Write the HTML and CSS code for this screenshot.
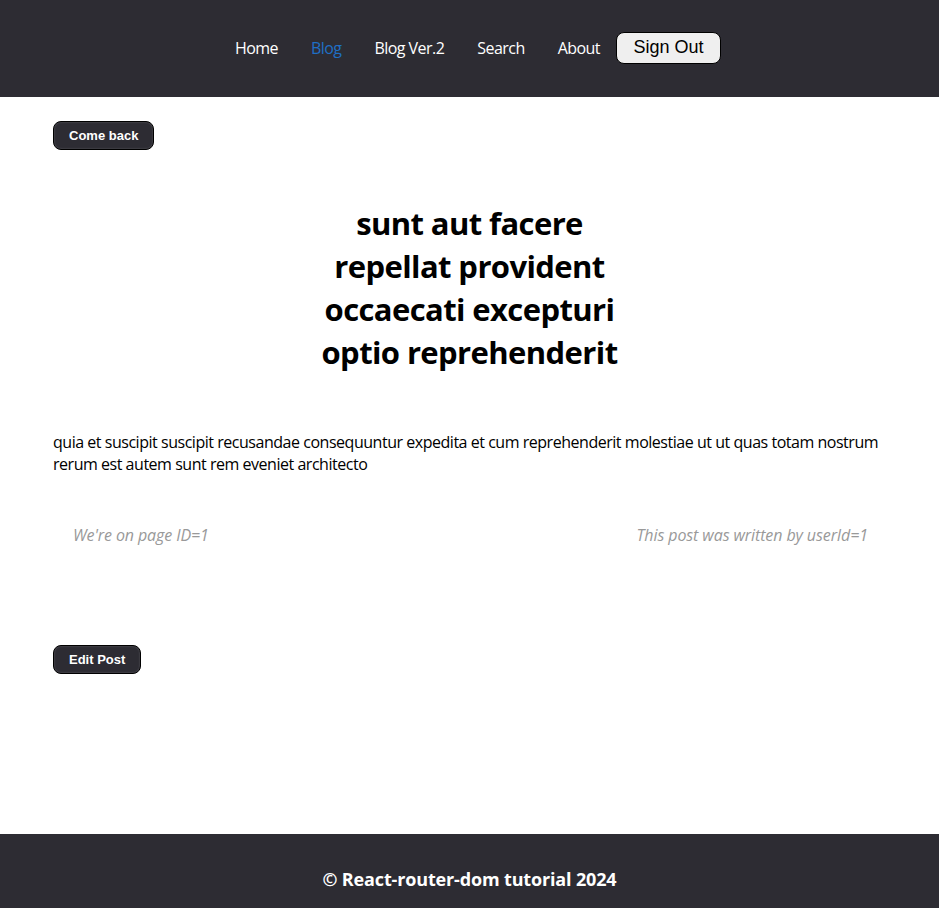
FILE: index.html
```html
<!DOCTYPE html>
<html lang="en">
<head>
<meta charset="utf-8">
<title>Post</title>
<link rel="stylesheet" href="styles.css">
</head>
<body>
<div class="page">
  <header class="header">
    <nav class="nav">
      <a class="nav-link" href="#">Home</a>
      <a class="nav-link active" href="#">Blog</a>
      <a class="nav-link" href="#">Blog Ver.2</a>
      <a class="nav-link" href="#">Search</a>
      <a class="nav-link" href="#">About</a>
      <button class="signout">Sign Out</button>
    </nav>
  </header>
  <main class="main">
    <button class="dark-btn">Come back</button>
    <h1 class="title">sunt aut facere repellat provident occaecati excepturi optio reprehenderit</h1>
    <p class="body-text">quia et suscipit suscipit recusandae consequuntur expedita et cum reprehenderit molestiae ut ut quas totam nostrum rerum est autem sunt rem eveniet architecto</p>
    <div class="meta">
      <span>We're on page ID=1</span>
      <span>This post was written by userId=1</span>
    </div>
    <button class="dark-btn edit">Edit Post</button>
  </main>
  <footer class="footer">© React-router-dom tutorial 2024</footer>
</div>
</body>
</html>
```
FILE: styles.css
```css
* { box-sizing: border-box; }
html, body { margin: 0; padding: 0; }
body {
  font-family: "Open Sans", "Noto Sans", sans-serif;
  color: #000;
  background: #fff;
}
.page {
  min-height: 908px;
  display: flex;
  flex-direction: column;
}
.header {
  background: #2d2c33;
  height: 97px;
  display: flex;
  align-items: center;
  justify-content: center;
}
.nav {
  display: flex;
  align-items: center;
  margin-top: -1px;
}
.nav-link {
  color: #fff;
  text-decoration: none;
  font-size: 16px;
  padding: 0 16.5px;
  letter-spacing: -0.55px;
}
.nav-link.active { color: #1f6fc5; }
.signout {
  font-family: "Liberation Sans", Arial, sans-serif;
  font-size: 18px;
  background: #efefef;
  color: #000;
  border: 1px solid #000;
  border-radius: 8px;
  padding: 4px 16px 5px;
  height: 32px;
  margin-left: 0;
}
.main {
  flex: 1;
  padding: 24px 53px 0;
}
.dark-btn {
  display: block;
  font-family: "Liberation Sans", Arial, sans-serif;
  font-weight: bold;
  font-size: 13px;
  color: #fff;
  background: #2d2c33;
  border: 1px solid #000;
  border-radius: 8px;
  height: 29px;
  padding: 0 15px;
  box-shadow: inset 0 0 2px rgba(255,255,255,0.25);
}
.title {
  font-size: 31px;
  font-weight: bold;
  line-height: 43px;
  text-align: center;
  max-width: 305px;
  margin: 52px auto 0;
  letter-spacing: -0.6px;
}
.body-text {
  font-size: 16px;
  line-height: 22px;
  margin: 57px 0 0;
  letter-spacing: -0.47px;
}
.meta {
  display: flex;
  justify-content: space-between;
  padding: 0 18px 0 20px;
  margin-top: 49px;
  font-style: italic;
  color: #999;
  font-size: 16px;
  line-height: 22px;
  letter-spacing: -0.1px;
}
.edit { margin-top: 99px; }
.footer {
  background: #2d2c33;
  color: #fff;
  height: 74px;
  display: flex;
  align-items: center;
  justify-content: center;
  padding-top: 16px;
  font-weight: bold;
  font-size: 18px;
  letter-spacing: -0.15px;
}
```
